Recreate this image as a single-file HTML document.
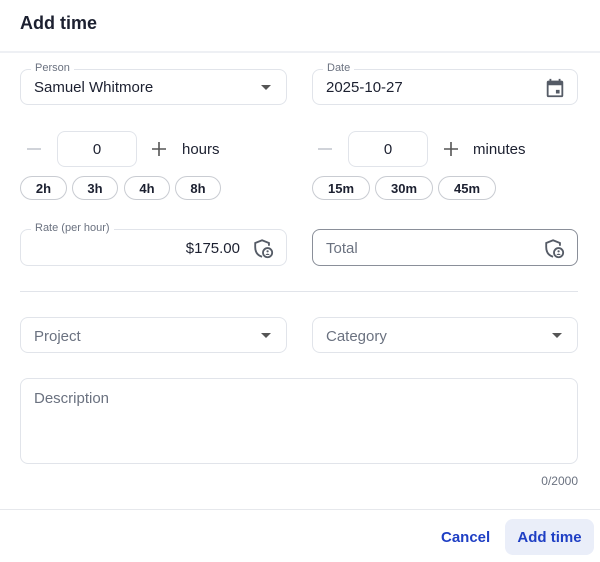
<!DOCTYPE html>
<html><head><style>
*{box-sizing:border-box;margin:0;padding:0}
body{width:600px;height:562px;background:#fff;font-family:"Liberation Sans",sans-serif;color:#1c2030;position:relative;overflow:hidden;line-height:1.15}
.a{position:absolute}
.f{position:absolute;border:1px solid #e1e4ea;border-radius:8px;background:#fff}
.lbl{position:absolute;top:-8px;left:10px;padding:0 4px;background:#fff;font-size:11px;color:#6b7280}
.val{position:absolute;left:13px;font-size:15px}
.chip{position:absolute;top:176px;height:24px;border:1px solid #c9ccd2;border-radius:12px;font-size:13px;font-weight:bold;text-align:center;line-height:23px}
.box{position:absolute;top:131px;width:80px;height:36px;border:1px solid #e1e4ea;border-radius:8px;text-align:center;line-height:36px;font-size:15px}
.pl{position:absolute;font-size:15px;color:#6b7280}
.arr{position:absolute;right:15px;top:15px;width:0;height:0;border-left:5px solid transparent;border-right:5px solid transparent;border-top:5px solid #555}
</style></head><body>
<div class="a" style="left:20px;top:13px;font-size:18px;font-weight:bold">Add time</div>
<div class="a" style="left:0;top:51px;width:600px;height:2px;background:#eef0f4"></div>

<div class="f" style="left:20px;top:69px;width:267px;height:36px"><div class="lbl">Person</div><div class="val" style="top:9px">Samuel Whitmore</div><div class="arr"></div></div>
<div class="f" style="left:312px;top:69px;width:266px;height:36px"><div class="lbl">Date</div><div class="val" style="top:9px">2025-10-27</div>
<svg class="a" style="right:11px;top:7px" width="22" height="22" viewBox="0 0 24 24"><path fill="#555b66" d="M19 4h-1V2h-2v2H8V2H6v2H5a2 2 0 0 0-2 2v14a2 2 0 0 0 2 2h14a2 2 0 0 0 2-2V6a2 2 0 0 0-2-2zm0 16H5V9h14v11zm-6-6h4v4h-4z"/></svg></div>

<div class="a" style="left:27px;top:148px;width:14px;height:1.5px;background:#d0d3d9"></div>
<div class="box" style="left:57px">0</div>
<svg class="a" style="left:152px;top:142px" width="14" height="14"><path d="M7 0v14M0 7h14" stroke="#555" stroke-width="1.6"/></svg>
<div class="a" style="left:182px;top:141px;font-size:15px">hours</div>
<div class="chip" style="left:20px;width:47px">2h</div>
<div class="chip" style="left:72px;width:46px">3h</div>
<div class="chip" style="left:124px;width:46px">4h</div>
<div class="chip" style="left:175px;width:46px">8h</div>

<div class="a" style="left:318px;top:148px;width:14px;height:1.5px;background:#d0d3d9"></div>
<div class="box" style="left:348px">0</div>
<svg class="a" style="left:444px;top:142px" width="14" height="14"><path d="M7 0v14M0 7h14" stroke="#555" stroke-width="1.6"/></svg>
<div class="a" style="left:473px;top:141px;font-size:15px">minutes</div>
<div class="chip" style="left:312px;width:58px">15m</div>
<div class="chip" style="left:375px;width:58px">30m</div>
<div class="chip" style="left:438px;width:58px">45m</div>

<div class="f" style="left:20px;top:229px;width:267px;height:37px"><div class="lbl">Rate (per hour)</div><div class="a" style="right:46px;top:10px;font-size:15px">$175.00</div>
<svg class="a" style="right:12px;top:8px" width="22" height="22" viewBox="0 0 24 24"><path fill="none" stroke="#555b66" stroke-width="2" d="M11 20.5C6 19 3.5 15 3.5 10V5.5L11 2.5l7.5 3v3"/><circle cx="17" cy="16" r="5" fill="none" stroke="#555b66" stroke-width="2"/><circle cx="17" cy="14.5" r="1.2" fill="#555b66"/><path d="M14.8 18.5a2.3 2 0 0 1 4.4 0z" fill="#555b66"/></svg></div>
<div class="f" style="left:312px;top:229px;width:266px;height:37px;border-color:#8a8f99"><div class="pl" style="left:13px;top:10px">Total</div>
<svg class="a" style="right:12px;top:8px" width="22" height="22" viewBox="0 0 24 24"><path fill="none" stroke="#555b66" stroke-width="2" d="M11 20.5C6 19 3.5 15 3.5 10V5.5L11 2.5l7.5 3v3"/><circle cx="17" cy="16" r="5" fill="none" stroke="#555b66" stroke-width="2"/><circle cx="17" cy="14.5" r="1.2" fill="#555b66"/><path d="M14.8 18.5a2.3 2 0 0 1 4.4 0z" fill="#555b66"/></svg></div>

<div class="a" style="left:20px;top:291px;width:558px;height:1px;background:#e1e4ea"></div>

<div class="f" style="left:20px;top:317px;width:267px;height:36px"><div class="pl" style="left:13px;top:10px">Project</div><div class="arr"></div></div>
<div class="f" style="left:312px;top:317px;width:266px;height:36px"><div class="pl" style="left:13px;top:10px">Category</div><div class="arr"></div></div>

<div class="f" style="left:20px;top:378px;width:558px;height:86px"><div class="pl" style="left:13px;top:11px">Description</div></div>
<div class="a" style="right:22px;top:475px;font-size:12px;color:#6b7280">0/2000</div>

<div class="a" style="left:0;top:509px;width:600px;height:1px;background:#e6e8ec"></div>
<div class="a" style="left:441px;top:529px;font-size:15px;font-weight:bold;color:#1f3fc4">Cancel</div>
<div class="a" style="left:505px;top:519px;width:89px;height:36px;border-radius:8px;background:#eaeef9;color:#1f3fc4;font-weight:bold;font-size:15px;text-align:center;line-height:37px">Add time</div>
</body></html>
